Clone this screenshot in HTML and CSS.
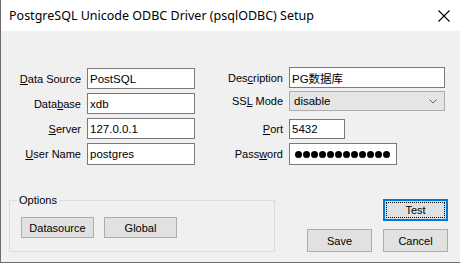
FILE: index.html
```html
<!DOCTYPE html>
<html>
<head>
<title>psqlODBC Setup</title>
<link rel="stylesheet" href="styles.css">
</head>
<body>
<div class="window">
  <div class="titlebar">
    <span class="title">PostgreSQL Unicode ODBC Driver (psqlODBC) Setup</span>
    <svg class="close" width="12" height="12" viewBox="0 0 12 12">
      <path d="M0.5 0.5L11.5 11.5M11.5 0.5L0.5 11.5" stroke="#000" stroke-width="1.1"/>
    </svg>
  </div>
  <div class="content">
    <div class="form">
      <div class="fields left">
        <div class="row"><label class="lbl"><u>D</u>ata Source</label><div class="input w108">PostSQL</div></div>
        <div class="row"><label class="lbl">Data<u>b</u>ase</label><div class="input w108">xdb</div></div>
        <div class="row"><label class="lbl"><u>S</u>erver</label><div class="input w108">127.0.0.1</div></div>
        <div class="row tall"><label class="lbl"><u>U</u>ser Name</label><div class="input w108">postgres</div></div>
      </div>
      <div class="fields right">
        <div class="row"><label class="lbl">Des<u>c</u>ription</label><div class="input w156">PG数据库</div></div>
        <div class="row r-ssl"><label class="lbl">SS<u>L</u> Mode</label>
          <div class="combo">
            <span>disable</span>
            <svg width="8" height="5" viewBox="0 0 8 5"><polyline points="0.5,0.5 4,4 7.5,0.5" fill="none" stroke="#606060" stroke-width="1"/></svg>
          </div>
        </div>
        <div class="row r-port"><label class="lbl"><u>P</u>ort</label><div class="input w56">5432</div></div>
        <div class="row r-pass tall"><label class="lbl">Pass<u>w</u>ord</label>
          <div class="input w108 dots">
            <span></span><span></span><span></span><span></span><span></span><span></span>
            <span></span><span></span><span></span><span></span><span></span><span></span>
          </div>
        </div>
      </div>
    </div>
    <div class="bottom">
      <fieldset class="group">
        <legend>Options</legend>
        <button class="btn">Datasource</button>
        <button class="btn">Global</button>
      </fieldset>
      <div class="actions">
        <button class="btn btn-test">Test</button>
        <div class="action-row">
          <button class="btn btn-wide">Save</button>
          <button class="btn btn-wide">Cancel</button>
        </div>
      </div>
    </div>
  </div>
</div>
</body>
</html>
```
FILE: styles.css
```css
body {
  margin: 0;
  font-family: "Liberation Sans", Arial, "Noto Sans CJK SC", sans-serif;
  font-size: 11px;
  color: #000;
  background: #fff;
}
.window {
  width: 460px;
  height: 263px;
  box-sizing: border-box;
  border-left: 1px solid #6d6d6d;
  border-bottom: 1px solid #6d6d6d;
  background: #f0f0f0;
  display: flex;
  flex-direction: column;
}
.titlebar {
  height: 31px;
  background: #fff;
  display: flex;
  align-items: center;
  padding-left: 8px;
  padding-right: 10px;
}
.title {
  flex: 1;
  font-family: "Noto Sans", sans-serif;
  font-size: 12.5px;
  color: #000;
}
.content {
  flex: 1;
}
.form {
  display: flex;
  align-items: flex-start;
  margin-top: 36px;
}
.fields {
  display: flex;
  flex-direction: column;
}
.left {
  margin-left: 9px;
  margin-top: 1px;
  gap: 4px;
}
.right {
  margin-left: 4px;
}
.row {
  display: flex;
  align-items: center;
  height: 21px;
}
.row.tall {
  height: 22px;
}
.lbl {
  text-align: right;
  margin-right: 6px;
  white-space: nowrap;
}
.left .lbl {
  width: 71px;
}
.right .lbl {
  width: 84px;
}
.r-ssl {
  margin-top: 3px;
  height: 20px;
}
.r-port {
  margin-top: 8px;
  height: 20px;
}
.r-pass {
  margin-top: 4px;
}
.input {
  height: 100%;
  box-sizing: border-box;
  border: 1px solid #7a7a7a;
  background: #fff;
  padding-left: 2px;
  display: flex;
  align-items: center;
  font-size: 11.5px;
}
.w108 {
  width: 108px;
}
.w156 {
  width: 156px;
}
.w56 {
  width: 56px;
}
.combo {
  width: 156px;
  height: 20px;
  box-sizing: border-box;
  border: 1px solid #adadad;
  background: #e5e5e5;
  display: flex;
  align-items: center;
  justify-content: space-between;
  padding: 0 7px 0 4px;
  font-size: 11.5px;
}
.dots {
  gap: 1px;
  padding-left: 5px;
}
.dots span {
  width: 7px;
  height: 7px;
  border-radius: 50%;
  background: #000;
}
.bottom {
  display: flex;
  margin-top: 29px;
}
.group {
  margin: 0 0 0 8px;
  width: 266px;
  box-sizing: border-box;
  border: 1px solid #dcdcdc;
  padding: 10px 0 11px 11px;
  display: flex;
  gap: 10px;
  align-items: flex-start;
}
.group legend {
  padding: 0 2px;
  margin-left: -4px;
  line-height: 13px;
  font-size: 11px;
}
.btn {
  width: 73px;
  height: 21px;
  padding: 0;
  background: #e1e1e1;
  border: 1px solid #adadad;
  font-family: "Liberation Sans", Arial, sans-serif;
  font-size: 11px;
  color: #000;
}
.actions {
  margin-left: auto;
  margin-right: 12px;
  padding-top: 5px;
  display: flex;
  flex-direction: column;
  align-items: flex-end;
}
.btn-test {
  width: 65px;
  height: 22px;
  border: 2px solid #0078d7;
  outline: 1px dotted #000;
  outline-offset: -4px;
}
.action-row {
  display: flex;
  gap: 11px;
  margin-top: 8px;
}
.btn-wide {
  width: 65px;
  height: 23px;
}
```
